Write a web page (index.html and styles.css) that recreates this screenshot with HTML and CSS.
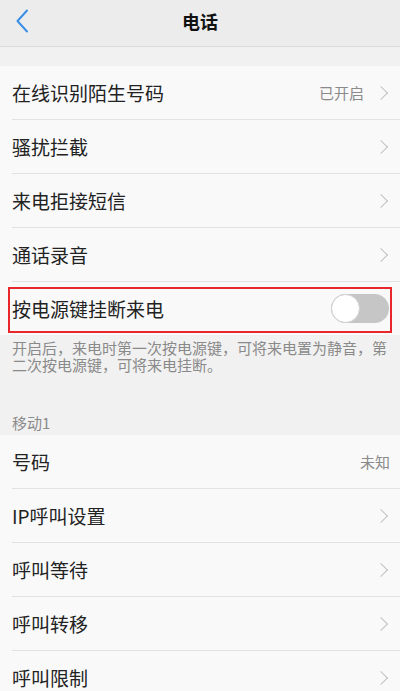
FILE: index.html
```html
<!DOCTYPE html>
<html lang="zh-CN">
<head>
  <meta charset="UTF-8">
  <meta name="viewport" content="width=device-width, initial-scale=1.0">
  <title>电话</title>
  <link rel="stylesheet" href="styles.css">
</head>
<body>
  <header class="topbar">
    <svg class="back" width="14" height="24" viewBox="0 0 14 24">
      <path d="M12 1.5 L2.5 12 L12 22.5" fill="none" stroke="#3b8fe6" stroke-width="2" stroke-linecap="round" stroke-linejoin="round"/>
    </svg>
    <h1>电话</h1>
  </header>

  <div class="list">
    <div class="row">
      <span class="label">在线识别陌生号码</span>
      <span class="value">已开启</span>
      <span class="arrow"></span>
    </div>
    <div class="row">
      <span class="label">骚扰拦截</span>
      <span class="arrow"></span>
    </div>
    <div class="row">
      <span class="label">来电拒接短信</span>
      <span class="arrow"></span>
    </div>
    <div class="row">
      <span class="label">通话录音</span>
      <span class="arrow"></span>
    </div>
    <div class="row highlight">
      <span class="label">按电源键挂断来电</span>
      <span class="switch"><span class="knob"></span></span>
    </div>
  </div>

  <p class="note">开启后，来电时第一次按电源键，可将来电置为静音，第二次按电源键，可将来电挂断。</p>
  <div class="section-title">移动1</div>

  <div class="list">
    <div class="row">
      <span class="label">号码</span>
      <span class="value only">未知</span>
    </div>
    <div class="row">
      <span class="label">IP呼叫设置</span>
      <span class="arrow"></span>
    </div>
    <div class="row">
      <span class="label">呼叫等待</span>
      <span class="arrow"></span>
    </div>
    <div class="row">
      <span class="label">呼叫转移</span>
      <span class="arrow"></span>
    </div>
    <div class="row">
      <span class="label">呼叫限制</span>
      <span class="arrow"></span>
    </div>
  </div>
</body>
</html>
```

FILE: styles.css
```css
body {
  margin: 0;
  background-color: #f1f1f1;
  color: #222;
  font-family: 'Noto Sans CJK SC', 'Noto Sans', sans-serif;
  overflow: hidden;
}

.topbar {
  height: 46px;
  background-color: #ececec;
  border-bottom: 1px solid #d9d9d9;
  display: flex;
  align-items: center;
  justify-content: center;
  position: relative;
}

.topbar h1 {
  margin: 0 0 4px;
  font-size: 18px;
  font-weight: bold;
  color: #111;
}

.back {
  position: absolute;
  left: 15px;
  top: 9px;
}

.list {
  background-color: #f9f9f9;
  margin-top: 19px;
}

.row {
  height: 53px;
  margin-left: 12px;
  padding-right: 10px;
  border-bottom: 1px solid #e2e2e2;
  display: flex;
  align-items: center;
  position: relative;
}

.row:last-child {
  border-bottom: none;
}

.label {
  flex: 1;
  font-size: 19px;
  color: #222;
}

.value {
  font-size: 15px;
  color: #8a8a8a;
  margin-right: 12px;
}

.value.only {
  margin-right: 0;
}

.arrow {
  width: 9px;
  height: 9px;
  border-top: 1.5px solid #c2c2c2;
  border-right: 1.5px solid #c2c2c2;
  transform: rotate(45deg);
  margin-right: 4px;
}

.highlight::after {
  content: "";
  position: absolute;
  left: -4px;
  right: 8px;
  top: 5px;
  bottom: 2px;
  border: 2px solid #e8262c;
}

.switch {
  width: 58px;
  height: 29px;
  border-radius: 15px;
  background-color: #c6c6c6;
  position: relative;
  margin-right: 1px;
}

.knob {
  position: absolute;
  left: 0;
  top: 0;
  width: 27px;
  height: 27px;
  border-radius: 50%;
  background-color: #fff;
  border: 1px solid #cfcfcf;
}

.note {
  margin: 0;
  padding: 4px 8px 0 12px;
  font-size: 15px;
  line-height: 17px;
  color: #8a8a8a;
}

.section-title {
  padding: 41px 12px 0;
  font-size: 15px;
  color: #8a8a8a;
  line-height: 18px;
}

.section-title + .list {
  margin-top: 3px;
}
```
